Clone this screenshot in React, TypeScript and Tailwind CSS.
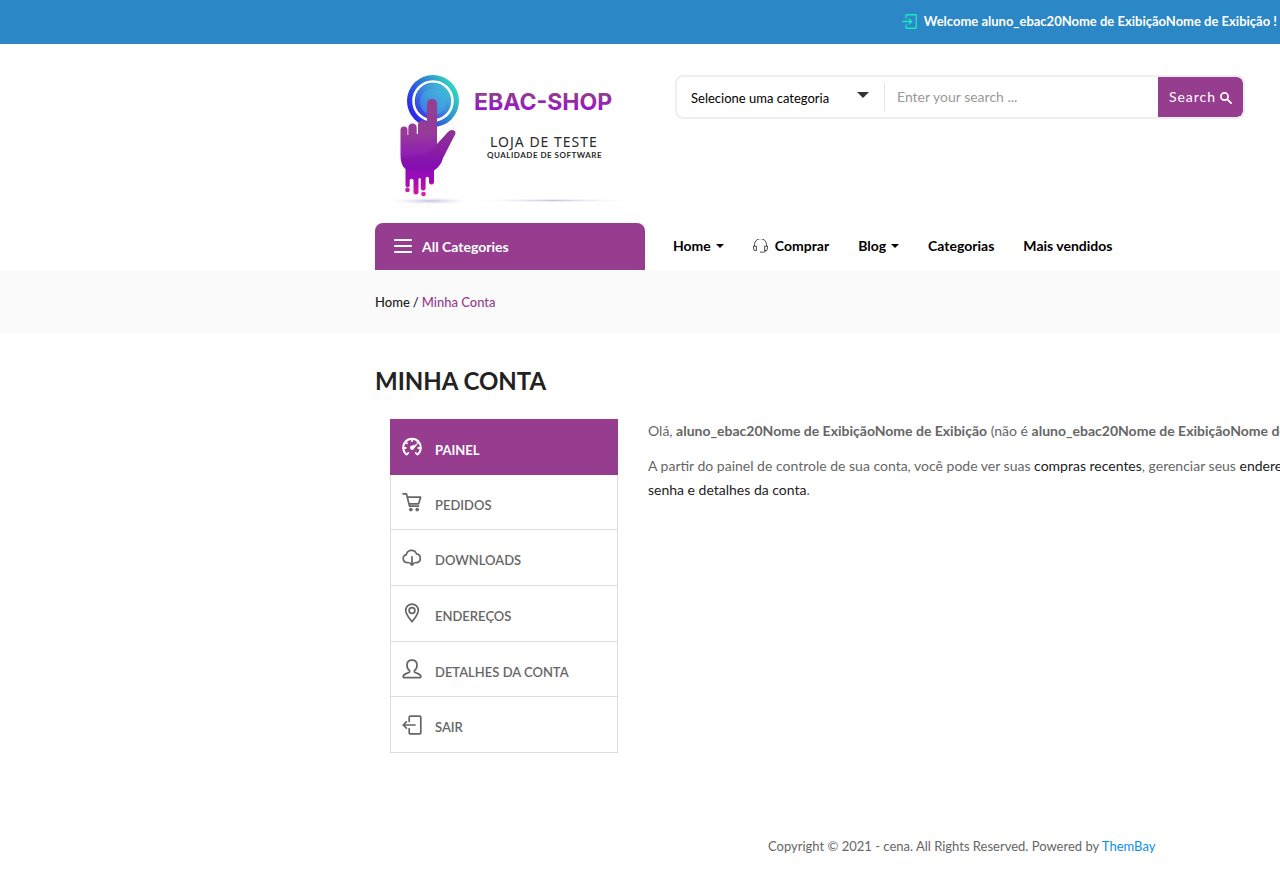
import type { ReactNode } from "react";

function Icon({ children, className = "size-5", width = 1.7 }: { children: ReactNode; className?: string; width?: number }) {
  return (
    <svg
      viewBox="0 0 20 20"
      className={className}
      fill="none"
      stroke="currentColor"
      strokeWidth={width}
      strokeLinecap="round"
      strokeLinejoin="round"
      aria-hidden="true"
    >
      {children}
    </svg>
  );
}

const icons = {
  dashboard: (
    <Icon>
      <path d="M5 17.8A8.800 8.800 0 1 1 15 17.800" strokeWidth="2" strokeLinecap="butt" />
      <path d="M4.300 18 6.800 15.400M15.700 18 13.200 15.400M2 11h2.400M18 11h-2.400M4.200 5.600l1.400 1.300M10 2.500v2.200M15.800 5.600l-1 .9" strokeWidth="1.800" strokeLinecap="butt" />
      <path d="M9.200 9.400 15 7.400 11 12.200Z" fill="currentColor" strokeWidth=".8" />
      <circle cx="10" cy="10.800" r="2" fill="currentColor" stroke="none" />
    </Icon>
  ),
  cart: (
    <Icon>
      <path d="M1 1.8h3.400L7.600 14.200h8.800M5.400 5.200H18.600L16.600 11.800H7" />
      <circle cx="8.800" cy="17.600" r="1.400" fill="currentColor" strokeWidth="1" />
      <circle cx="15.200" cy="17.600" r="1.400" fill="currentColor" strokeWidth="1" />
    </Icon>
  ),
  download: (
    <Icon>
      <path d="M6.300 14.600H5a4 4 0 0 1-.6-7.900A5.200 5.200 0 0 1 14.400 5.800a4.500 4.500 0 0 1 .6 8.800h-1.300M10 8.800v8.200M7.800 15 10 17.200 12.200 15" />
    </Icon>
  ),
  pin: (
    <Icon>
      <path d="M10 18.800C7 14.800 3.700 11 3.700 7.400a6.300 6.300 0 0 1 12.600 0C16.300 11 13 14.800 10 18.800Z" />
      <circle cx="10" cy="7.500" r="2.900" />
    </Icon>
  ),
  user: (
    <Icon>
      <path d="M7.600 11.600C5.800 10.400 5 8.400 5 6.300 5 3 7 1.200 10 1.200S15 3 15 6.300c0 2.100-.8 4.100-2.600 5.300v1.500c1.600 1.200 6 1.600 6.400 4.200.1 1-.4 1.400-1.200 1.400H2.400c-.8 0-1.300-.4-1.200-1.400.4-2.600 4.800-3 6.400-4.200Z" />
    </Icon>
  ),
  exit: (
    <Icon>
      <path d="M7.200 6.400V2.200c0-.7.4-1.100 1.100-1.100h9.400c.7 0 1.100.4 1.100 1.100v15.600c0 .7-.4 1.100-1.100 1.100H8.300c-.7 0-1.100-.4-1.100-1.100v-4.200M13 10H1.200M4.400 6.800 1.200 10 4.400 13.200" />
    </Icon>
  ),
};

const accountLinks = [
  { label: "PAINEL", icon: icons.dashboard },
  { label: "PEDIDOS", icon: icons.cart },
  { label: "DOWNLOADS", icon: icons.download },
  { label: "ENDEREÇOS", icon: icons.pin },
  { label: "DETALHES DA CONTA", icon: icons.user },
  { label: "SAIR", icon: icons.exit },
];

function Caret() {
  return (
    <svg viewBox="0 0 8 4" className="h-1 w-2 fill-current" aria-hidden="true">
      <path d="M0 0h8L4 4Z" />
    </svg>
  );
}

function Logo() {
  return (
    <svg viewBox="0 0 270 150" className="block h-[150px] w-[270px]" role="img" aria-label="EBAC-SHOP">
      <defs>
        <linearGradient id="ring" x1="0" y1=".8" x2="1" y2=".2">
          <stop offset="0" stopColor="#2b12f5" />
          <stop offset=".5" stopColor="#2e79d6" />
          <stop offset="1" stopColor="#2fe6bd" />
        </linearGradient>
        <linearGradient id="disc" x1="0" y1="1" x2="1" y2="0">
          <stop offset="0" stopColor="#3424ed" />
          <stop offset=".5" stopColor="#3b86dc" />
          <stop offset="1" stopColor="#43d3d4" />
        </linearGradient>
        <linearGradient id="hand" gradientUnits="userSpaceOnUse" x1="0" y1="38" x2="0" y2="138">
          <stop offset="0" stopColor="#943f91" />
          <stop offset=".35" stopColor="#963b98" />
          <stop offset=".68" stopColor="#8b0ebd" />
          <stop offset=".82" stopColor="#a00bb4" />
          <stop offset="1" stopColor="#e818a5" />
        </linearGradient>
        <linearGradient id="word" gradientUnits="userSpaceOnUse" x1="0" y1="33" x2="0" y2="51">
          <stop offset="0" stopColor="#913f8c" />
          <stop offset="1" stopColor="#9811cf" />
        </linearGradient>
        <radialGradient id="shade">
          <stop offset="0" stopColor="#c2c0e4" />
          <stop offset="1" stopColor="#fff" stopOpacity="0" />
        </radialGradient>
      </defs>
      <ellipse cx="55" cy="141" rx="46" ry="4" fill="url(#shade)" />
      <ellipse cx="178" cy="140.500" rx="84" ry="2" fill="url(#shade)" />
      <circle cx="58" cy="41" r="26" fill="url(#ring)" />
      <circle cx="58" cy="41" r="19.500" fill="none" stroke="#fff" strokeWidth="2.600" />
      <circle cx="58" cy="41" r="17.600" fill="url(#disc)" />
      <circle cx="58" cy="42" r="13" fill="#48b8e4" opacity=".45" />
      <path
        fill="url(#hand)"
        d="M25.500 70q0-3.500 3.500-3.500t3.500 3.500v5h.8v-7q0-4.500 4.200-4.500t4.200 4.500v6h1.300v-9q0-4.500 4.500-4.500T52 65V44q0-5 5-5t5 5V84L73 72q3-3 6-1.500t0 6L68 98q-2 8-9 12.500V123q-2.500 3-5 0v-5q-1.700-2.500-3.400 0v11q-2.400 3-4.800 0v-10q-1-2-2.300 0v14q-2.500 3-5 0v-13q-2-2.500-3.800 0v6q-2 3-4.200 0V109Q25.500 105 25.500 95Z"
      />
      <path d="M25.500 97Q52 98 62 84L73 72q3-3 6-1.500t0 6L68 98q-2 8-9 12-14 4-28-1-5-4-5.500-12Z" fill="#6d1089" opacity=".2" />
      <circle cx="32.500" cy="130" r="2.300" fill="#cb16ae" />
      <circle cx="48.500" cy="134" r="2.300" fill="#e11aa9" />
      <text x="99" y="50" fill="url(#word)" className="font-['Inter'] text-[23px] font-bold">EBAC-SHOP</text>
      <text x="115" y="87" fill="#2a2a2a" className="font-['Noto_Sans'] text-[14px] tracking-[1px]">LOJA DE TESTE</text>
      <text x="112" y="98" fill="#2a2a2a" className="font-['Lato'] text-[8px] font-bold tracking-[0.5px]">QUALIDADE DE SOFTWARE</text>
    </svg>
  );
}

export default function App() {
  return (
    <div className="min-h-screen overflow-x-hidden bg-white font-['Lato',sans-serif] text-sm text-[#666]">
      <div className="flex h-11 items-center justify-end gap-[7px] bg-[#2b87c5] pr-[3px] pb-0.5 text-[13px] font-bold text-white">
        <Icon className="size-[15px] text-[#1ee8c0]" width={1.7}>
          <path d="M5.500 5.500V1h13.500v18H5.500v-4.500M.8 10H13M9.500 6.500 13 10 9.500 13.500" />
        </Icon>
        <p>Welcome aluno_ebac20Nome de ExibiçãoNome de Exibição !</p>
      </div>

      <header className="pl-[375px]">
        <div className="flex items-start gap-[30px] pt-4 pr-[35px]">
          <a href="#" className="shrink-0"><Logo /></a>
          <form className="mt-[15px] flex h-11 flex-1 overflow-hidden rounded-lg border-2 border-[#eee]" onSubmit={(e) => e.preventDefault()}>
            <div className="relative my-1.5 w-52 shrink-0 border-r border-[#e5e5e5]">
              <select aria-label="Categoria" className="h-full w-full appearance-none bg-transparent pt-0.5 pl-3.5 text-[13px] text-black outline-none">
                <option>Selecione uma categoria</option>
              </select>
              <svg viewBox="0 0 12 6" className="pointer-events-none absolute top-[9px] right-[15px] h-1.5 w-3 fill-[#333]" aria-hidden="true">
                <path d="M0 0h12L6 6Z" />
              </svg>
            </div>
            <input aria-label="Search" placeholder="Enter your search ..." className="min-w-0 flex-1 px-3 text-sm outline-none placeholder:text-[#999]" />
            <button className="flex w-[85px] shrink-0 items-center justify-center gap-1 rounded-r-md bg-[#963d8f] text-sm tracking-[1px] text-white">
              Search
              <Icon className="mt-0.5 size-3" width={2.8}>
                <path d="M13.500 7.500a6 6 0 1 1-12 0a6 6 0 0 1 12 0ZM12 12l6.500 6.500" />
              </Icon>
            </button>
          </form>
        </div>
        <div className="mt-[13px] flex h-12 items-start">
          <button className="flex h-[47px] w-[270px] shrink-0 items-center gap-2.5 rounded-t-lg bg-[#963d8f] pl-5 text-sm font-bold text-white">
            <svg viewBox="0 0 17 14" className="h-3.5 w-[17px] overflow-visible" stroke="currentColor" strokeWidth="2" strokeLinecap="round" aria-hidden="true">
              <path d="M0 0h16M0 6h16M0 12h16" />
            </svg>
            All Categories
          </button>
          <nav className="flex h-[46px] items-center gap-[29px] pl-7 text-sm font-bold whitespace-nowrap text-black">
            <a href="#" className="flex items-center gap-[5px]">Home <Caret /></a>
            <a href="#" className="flex items-center gap-[7px]">
              <Icon className="size-[15px] text-[#333]" width={1.2}>
                <path d="M2 9V7.500a8 8 0 0 1 16 0V9M1 9.500h3.500v6H2.500A1.500 1.500 0 0 1 1 14ZM19 9.500h-3.500v6h2a1.500 1.500 0 0 0 1.500-1.500ZM17 15.500q0 2-3 2h-4" />
              </Icon>
              Comprar
            </a>
            <a href="#" className="flex items-center gap-[5px]">Blog <Caret /></a>
            <a href="#">Categorias</a>
            <a href="#">Mais vendidos</a>
          </nav>
        </div>
      </header>

      <nav aria-label="Breadcrumb" className="flex h-[62px] items-center gap-[3px] bg-[#fafafa] pl-[375px] text-[13px] font-medium text-[#222]">
        <a href="#">Home</a>
        <span>/</span>
        <span className="text-[#963d8f]">Minha Conta</span>
      </nav>

      <main className="pt-8 pl-[375px]">
        <h1 className="text-2xl font-bold text-[#222]">MINHA CONTA</h1>
        <div className="mt-[22px] flex items-start gap-[30px] pl-[15px]">
          <nav aria-label="Conta" className="w-[228px] shrink-0">
            <ul className="grid h-[334px] grid-rows-6">
              {accountLinks.map(({ label, icon }, i) => (
                <li key={label} className={i === 0 ? "bg-[#963d8f] text-white" : "border-x border-b border-[#ddd]"}>
                  <a href="#" className={i === 0 ? "flex h-full items-center gap-[13px] pl-3 text-[13px] font-bold" : "flex h-full items-center gap-[13px] pl-[11px] text-[13px] font-semibold"}>
                    {icon}
                    <span className="pt-1.5">{label}</span>
                  </a>
                </li>
              ))}
            </ul>
          </nav>
          <div className="min-w-0 flex-1 overflow-hidden leading-6 whitespace-nowrap">
            <p>
              Olá, <strong>aluno_ebac20Nome de ExibiçãoNome de Exibição</strong> (não é <strong>aluno_ebac20Nome de ExibiçãoNome de</strong>
            </p>
            <p className="mt-[11px]">
              A partir do painel de controle de sua conta, você pode ver suas <a href="#" className="text-[#222]">compras recentes</a>, gerenciar seus <a href="#" className="text-[#222]">endereços</a>
              <br />
              <a href="#" className="text-[#222]">senha e detalhes da conta</a>.
            </p>
          </div>
        </div>
      </main>

      <footer className="mt-[81px] pb-9 pl-[375px] text-[13px] leading-6">
        <p className="pl-[393px]">
          Copyright © 2021 - cena. All Rights Reserved. Powered by <a href="#" className="text-[#0a8fee]">ThemBay</a>
        </p>
      </footer>
    </div>
  );
}
